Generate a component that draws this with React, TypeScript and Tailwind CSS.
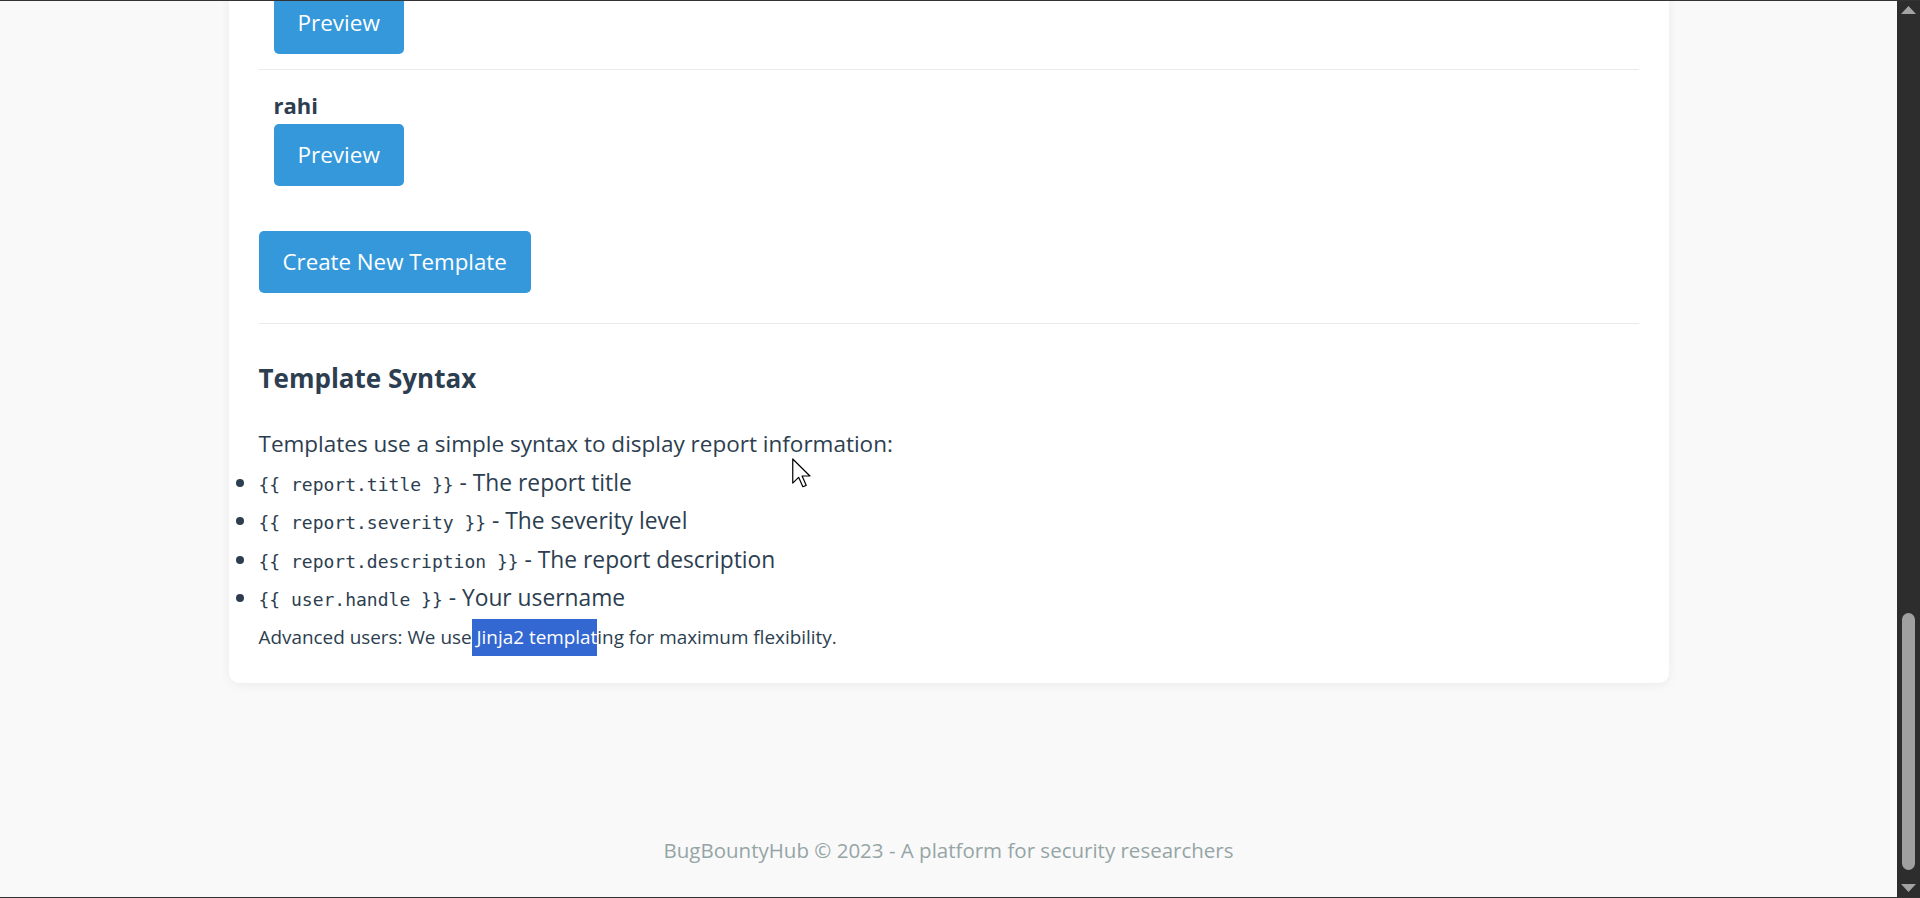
import React from 'react';

const sans = { fontFamily: '"Segoe UI", "Open Sans", "Noto Sans", sans-serif' };
const mono = { fontFamily: '"DejaVu Sans Mono", "Liberation Mono", monospace' };

const vars = [
  { code: '{{ report.title }}', label: 'The report title' },
  { code: '{{ report.severity }}', label: 'The severity level' },
  { code: '{{ report.description }}', label: 'The report description' },
  { code: '{{ user.handle }}', label: 'Your username' },
];

function PreviewButton() {
  return (
    <button className="h-[62px] px-6 rounded-[5px] bg-[#3498db] text-white text-[22.5px]">
      Preview
    </button>
  );
}

function Scrollbar() {
  return (
    <div className="w-[23px] bg-[#2d2d2d] flex flex-col items-center">
      <svg width="15" height="8" viewBox="0 0 15 8" className="mt-[5px]">
        <polygon points="7.5,0 15,8 0,8" fill="#a3a3a3" />
      </svg>
      <div className="flex-1 w-full flex flex-col items-center">
        <div className="flex-1" />
        <div className="w-[13px] h-[257px] rounded-full bg-[#a0a0a0]" />
        <div className="h-[14px]" />
      </div>
      <svg width="15" height="8" viewBox="0 0 15 8" className="mb-[5px]">
        <polygon points="0,0 15,0 7.5,8" fill="#a3a3a3" />
      </svg>
    </div>
  );
}

export default function App() {
  return (
    <div
      className="relative w-[1920px] h-[898px] overflow-hidden flex border-y border-[#333] text-[#2c3e50]"
      style={sans}
    >
      <div className="flex-1 bg-[#f9f9f9] flex flex-col overflow-hidden">
        <div className="mx-auto w-[1440px] bg-white rounded-b-[10px] shadow-[0_2px_12px_rgba(0,0,0,0.06)] px-[30px] pb-[27px] -mt-[9px]">
          <ul>
            <li className="pl-[15px] pb-[15px] border-b border-[#ebebeb]">
              <PreviewButton />
            </li>
            <li className="pl-[15px] pt-[20px] pb-[15px]">
              <div className="text-[22px] leading-[30px] font-bold">rahi</div>
              <div className="mt-[4px]">
                <PreviewButton />
              </div>
            </li>
          </ul>

          <button className="mt-[30px] h-[62px] px-6 rounded-[5px] bg-[#3498db] text-white text-[22.3px]">
            Create New Template
          </button>

          <div className="mt-[30px] border-t border-[#ebebeb]" />

          <h3 className="mt-[38px] text-[26px] leading-[32px] font-bold">Template Syntax</h3>

          <p className="mt-[35px] text-[22.5px] leading-[30px]">
            Templates use a simple syntax to display report information:
          </p>
          <ul className="mt-[5px] list-disc marker:text-[#2c3e50]">
            {vars.map((v) => (
              <li key={v.code} className="h-[38.3px] text-[22.8px] leading-[38.3px]">
                <code className="text-[18px] leading-none" style={mono}>{v.code}</code> - {v.label}
              </li>
            ))}
          </ul>
          <div className="mt-[2px] text-[18.9px] leading-[37px]">
            Advanced users: We use
            <span className="inline-block bg-[#3367d1] text-white leading-[37px] whitespace-pre"> Jinja2 templat</span>
            ing for maximum flexibility.
          </div>
        </div>

        <footer className="mt-[152px] text-center text-[20.5px] leading-[30px] text-[#95a5a6]">
          BugBountyHub © 2023 - A platform for security researchers
        </footer>
      </div>

      <Scrollbar />

      <svg
        className="absolute left-[792px] top-[457px]"
        width="19"
        height="30"
        viewBox="0 0 12.6 19.6"
      >
        <polygon
          points="0.5,0.5 0.5,16.5 4.4,12.7 7.2,18.9 9.4,18 6.7,11.8 11.9,11.8"
          fill="#fff"
          stroke="#000"
          strokeWidth="0.8"
          strokeLinejoin="round"
        />
      </svg>
    </div>
  );
}
